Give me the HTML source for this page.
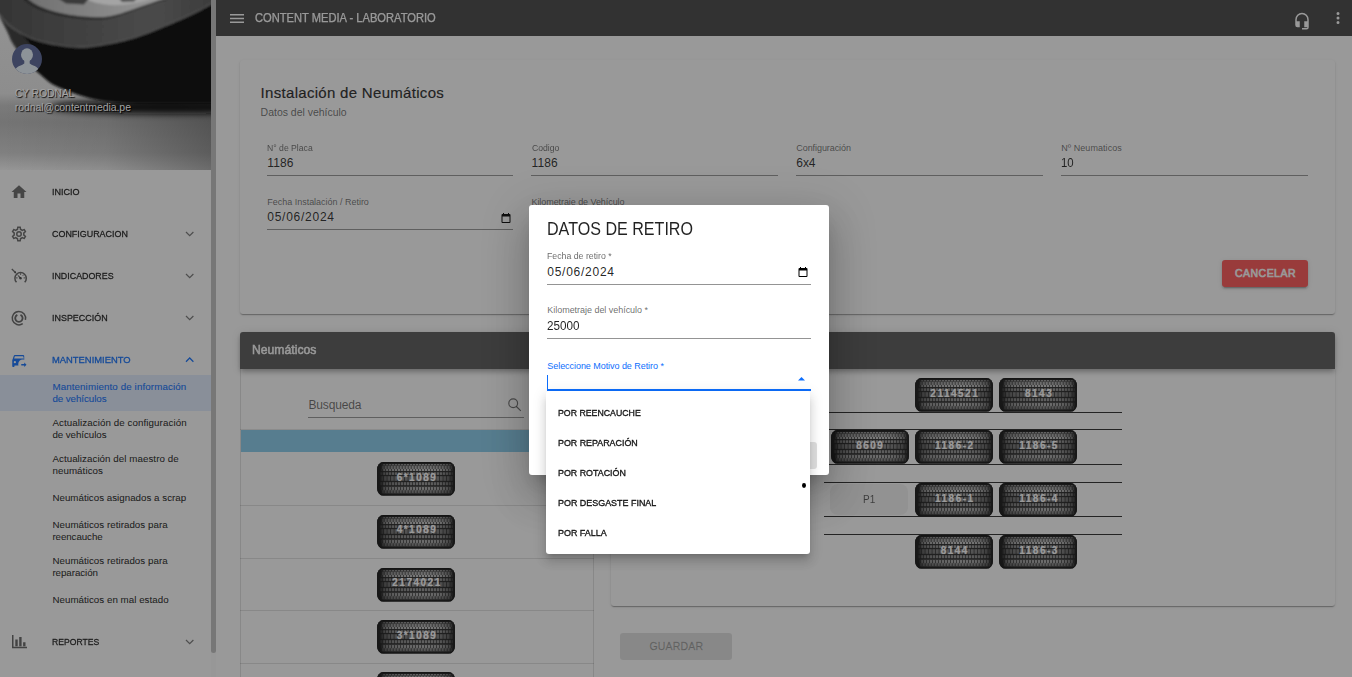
<!DOCTYPE html>
<html lang="es"><head><meta charset="utf-8"><title>CONTENT MEDIA - LABORATORIO</title>
<style>

html,body{margin:0;padding:0;background:#fff;}
body{width:1352px;height:677px;overflow:hidden;font-family:"Liberation Sans",sans-serif;}
#app{position:relative;width:1352px;height:677px;overflow:hidden;background:#fff;}
.t{position:absolute;white-space:nowrap;display:block;}
.abs{position:absolute;}
.card{position:absolute;background:#fff;border-radius:3px;box-shadow:0 2px 1px -1px rgba(0,0,0,.2),0 1px 1px 0 rgba(0,0,0,.14),0 1px 3px 0 rgba(0,0,0,.12);}
.tl{position:absolute;display:block;text-align:center;white-space:nowrap;font:bold 10px/10px 'Liberation Sans',sans-serif;letter-spacing:1.5px;color:#fff;text-shadow:0 0 1px rgba(255,255,255,.55);}
.ul{position:absolute;height:1px;background:rgba(0,0,0,.42);}
svg{position:absolute;overflow:visible;}

</style></head>
<body>
<div id="app">
<svg width="0" height="0" style="position:absolute"><defs>
<linearGradient id="tg" x1="0" x2="1" y1="0" y2="0"><stop offset="0" stop-color="#101010" stop-opacity="1"/><stop offset=".05" stop-color="#101010" stop-opacity=".85"/><stop offset=".1" stop-color="#101010" stop-opacity=".42"/><stop offset=".2" stop-color="#101010" stop-opacity=".2"/><stop offset=".4" stop-color="#101010" stop-opacity=".08"/><stop offset=".6" stop-color="#101010" stop-opacity="0"/><stop offset=".8" stop-color="#101010" stop-opacity=".12"/><stop offset=".92" stop-color="#101010" stop-opacity=".4"/><stop offset=".97" stop-color="#101010" stop-opacity=".8"/><stop offset="1" stop-color="#101010" stop-opacity="1"/></linearGradient>
<linearGradient id="tv" x1="0" x2="0" y1="0" y2="1"><stop offset="0" stop-color="#000" stop-opacity=".75"/><stop offset=".07" stop-color="#000" stop-opacity=".25"/><stop offset=".14" stop-color="#000" stop-opacity=".05"/><stop offset=".3" stop-color="#000" stop-opacity="0"/><stop offset=".75" stop-color="#000" stop-opacity=".1"/><stop offset=".93" stop-color="#000" stop-opacity=".35"/><stop offset="1" stop-color="#000" stop-opacity=".75"/></linearGradient>
<pattern id="p1" width="3" height="7" patternUnits="userSpaceOnUse"><rect x="0" y="0" width="2.300" height="3.400" fill="#cdcdcd"/><rect x="1.500" y="3.600" width="2.300" height="3.400" fill="#bcbcbc"/><rect x="-1.500" y="3.600" width="2.300" height="3.400" fill="#bcbcbc"/></pattern>
<pattern id="p2" width="3" height="4" patternUnits="userSpaceOnUse"><rect x="0" y="0" width="2.300" height="4" fill="#a2a2a2"/></pattern>
<pattern id="p3" width="3.500" height="6" patternUnits="userSpaceOnUse"><rect x="0" y="0" width="2.800" height="6" fill="#8e8e8e"/></pattern>
<clipPath id="tc"><rect x="0" y="0" width="78" height="33.600" rx="6.500" ry="7.500"/></clipPath>

</defs></svg>
<div style="position:absolute;left:216px;top:0px;width:1136px;height:36px;background:#424242;"></div>
<svg style="left:229.5px;top:13.5px" width="14" height="9" viewBox="0 0 14 9"><path d="M0 0h14v1.6H0zM0 3.7h14v1.6H0zM0 7.4h14V9H0z" fill="#fff"/></svg>
<span id="t0" class="t" style="left:254.7px;top:12.14px;font:400 12px/12px 'Liberation Sans',sans-serif;color:#fff;letter-spacing:0.000px;transform:scaleX(0.9281);transform-origin:0 0;-webkit-text-stroke:0.25px #fff;">CONTENT MEDIA - LABORATORIO</span>
<svg style="left:1293px;top:12.200px" width="18" height="18.400" preserveAspectRatio="none" viewBox="0 0 24 24"><path fill="#fff" d="M12 1a9 9 0 0 0-9 9v7a3 3 0 0 0 3 3h3v-8H5v-2a7 7 0 0 1 14 0v2h-4v8h4v1h-7v2h6a3 3 0 0 0 3-3V10a9 9 0 0 0-9-9z"/></svg>
<svg style="left:1329px;top:9px" width="18" height="18" viewBox="0 0 24 24"><path fill="#fff" d="M12 16a2 2 0 1 1 0 4 2 2 0 0 1 0-4zm0-6a2 2 0 1 1 0 4 2 2 0 0 1 0-4zm0-6a2 2 0 1 1 0 4 2 2 0 0 1 0-4z"/></svg>
<div class="card" style="left:240px;top:60px;width:1095px;height:254px"></div>
<span id="t1" class="t" style="left:260.6px;top:84.70px;font:400 15px/15px 'Liberation Sans',sans-serif;color:rgba(0,0,0,.87);letter-spacing:0.303px;-webkit-text-stroke:0.22px rgba(0,0,0,.87);">Instalación de Neumáticos</span>
<span id="t2" class="t" style="left:260.6px;top:107.01px;font:400 10.5px/10.5px 'Liberation Sans',sans-serif;color:rgba(0,0,0,.6);letter-spacing:-0.017px;">Datos del vehículo</span>
<span id="t3" class="t" style="left:267.3px;top:143.98px;font:400 9px/9px 'Liberation Sans',sans-serif;color:rgba(0,0,0,.6);letter-spacing:0.000px;transform:scaleX(0.9596);transform-origin:0 0;">N° de Placa</span><span id="t4" class="t" style="left:267.3px;top:156.84px;font:400 12px/12px 'Liberation Sans',sans-serif;color:rgba(0,0,0,.87);letter-spacing:0.096px;">1186</span><div class="ul" style="left:267px;top:175px;width:246px"></div>
<span id="t5" class="t" style="left:531.5999999999999px;top:143.98px;font:400 9px/9px 'Liberation Sans',sans-serif;color:rgba(0,0,0,.6);letter-spacing:0.000px;transform:scaleX(0.9604);transform-origin:0 0;">Codigo</span><span id="t6" class="t" style="left:531.5999999999999px;top:156.84px;font:400 12px/12px 'Liberation Sans',sans-serif;color:rgba(0,0,0,.87);letter-spacing:0.063px;">1186</span><div class="ul" style="left:531.3px;top:175px;width:246.5px"></div>
<span id="t7" class="t" style="left:796.3px;top:143.98px;font:400 9px/9px 'Liberation Sans',sans-serif;color:rgba(0,0,0,.6);letter-spacing:-0.071px;">Configuración</span><span id="t8" class="t" style="left:796.3px;top:156.84px;font:400 12px/12px 'Liberation Sans',sans-serif;color:rgba(0,0,0,.87);letter-spacing:-0.080px;">6x4</span><div class="ul" style="left:796px;top:175px;width:246.7px"></div>
<span id="t9" class="t" style="left:1061.3px;top:143.98px;font:400 9px/9px 'Liberation Sans',sans-serif;color:rgba(0,0,0,.6);letter-spacing:0.057px;">Nº Neumaticos</span><span id="t10" class="t" style="left:1061.3px;top:156.84px;font:400 12px/12px 'Liberation Sans',sans-serif;color:rgba(0,0,0,.87);letter-spacing:0.000px;transform:scaleX(0.9506);transform-origin:0 0;">10</span><div class="ul" style="left:1061px;top:175px;width:246.7px"></div>
<span id="t11" class="t" style="left:267.3px;top:197.98px;font:400 9px/9px 'Liberation Sans',sans-serif;color:rgba(0,0,0,.6);letter-spacing:-0.019px;">Fecha Instalación / Retiro</span><span id="t12" class="t" style="left:267.3px;top:210.84px;font:400 12px/12px 'Liberation Sans',sans-serif;color:rgba(0,0,0,.87);letter-spacing:0.737px;">05/06/2024</span><div class="ul" style="left:267px;top:229px;width:246px"></div>
<span id="t13" class="t" style="left:531.5px;top:197.98px;font:400 9px/9px 'Liberation Sans',sans-serif;color:rgba(0,0,0,.6);letter-spacing:-0.071px;">Kilometraje de Vehículo</span>
<svg style="left:499.5px;top:211.5px" width="12" height="12" viewBox="0 0 24 24"><path d="M19 4h-1V2h-2v2H8V2H6v2H5a2 2 0 0 0-2 2v14a2 2 0 0 0 2 2h14a2 2 0 0 0 2-2V6a2 2 0 0 0-2-2zm0 16H5V9h14v11z" fill="#000"/></svg>
<div style="position:absolute;left:1222px;top:260px;width:86px;height:27px;background:#ff5252;border-radius:3px;box-shadow:0 3px 1px -2px rgba(0,0,0,.2),0 2px 2px 0 rgba(0,0,0,.14),0 1px 5px 0 rgba(0,0,0,.12);"></div>
<span id="t14" class="t" style="left:1235px;top:268.41px;font:400 10.5px/10.5px 'Liberation Sans',sans-serif;color:#fff;letter-spacing:0.473px;-webkit-text-stroke:0.6px #fff;">CANCELAR</span>
<div style="position:absolute;left:240px;top:369px;width:354px;height:320px;background:#fff;border-left:1px solid rgba(0,0,0,.12);border-right:1px solid rgba(0,0,0,.12);box-sizing:border-box;"></div>
<span id="t15" class="t" style="left:308.5px;top:398.64px;font:400 12px/12px 'Liberation Sans',sans-serif;color:rgba(0,0,0,.6);letter-spacing:-0.178px;">Busqueda</span>
<div class="ul" style="left:308px;top:417px;width:215.5px"></div>
<svg style="left:505px;top:396px" width="18" height="18" viewBox="505 396 18 18"><g fill="none" stroke="rgba(0,0,0,.58)" stroke-width="1.150"><circle cx="513.200" cy="403.300" r="4.400"/><path d="M516.400 406.500l4.400 4.300"/></g></svg>
<div style="position:absolute;left:240.5px;top:429.6px;width:353px;height:22.6px;background:#86cbed;"></div>
<div style="position:absolute;left:240px;top:429px;width:354px;height:1px;background:rgba(0,0,0,.1);"></div>
<div style="position:absolute;left:240px;top:505px;width:354px;height:1px;background:rgba(0,0,0,.12);"></div>
<div style="position:absolute;left:240px;top:558px;width:354px;height:1px;background:rgba(0,0,0,.12);"></div>
<div style="position:absolute;left:240px;top:610px;width:354px;height:1px;background:rgba(0,0,0,.12);"></div>
<div style="position:absolute;left:240px;top:663px;width:354px;height:1px;background:rgba(0,0,0,.12);"></div>
<svg class="abs" style="left:377.2px;top:461.9px" width="78" height="34" viewBox="0 0 78 34"><rect x=".5" y="1" width="77" height="33" rx="6.500" ry="7.500" fill="#000" opacity=".25"/><rect x="0" y="0" width="78" height="33.600" rx="6.500" ry="7.500" fill="#262626"/>
<g clip-path="url(#tc)">
<rect x="4.500" y="2" width="71" height="7" fill="url(#p1)"/>
<rect x="3" y="10.300" width="73" height="2.600" fill="url(#p2)"/>
<rect x="3" y="14.200" width="73" height="4.600" fill="url(#p3)"/>
<rect x="3" y="20.200" width="73" height="3" fill="url(#p2)"/>
<g transform="translate(0,56.200) scale(1,-1)"><rect x="4.500" y="24.600" width="71" height="7" fill="url(#p1)"/></g>
<rect x="0" y="0" width="78" height="34" fill="url(#tg)"/>
<rect x="0" y="0" width="78" height="34" fill="url(#tv)"/>
</g></svg><span class="tl" style="left:378.0px;width:78px;top:472.74px;">6*1089</span>
<svg class="abs" style="left:377.2px;top:514.6px" width="78" height="34" viewBox="0 0 78 34"><rect x=".5" y="1" width="77" height="33" rx="6.500" ry="7.500" fill="#000" opacity=".25"/><rect x="0" y="0" width="78" height="33.600" rx="6.500" ry="7.500" fill="#262626"/>
<g clip-path="url(#tc)">
<rect x="4.500" y="2" width="71" height="7" fill="url(#p1)"/>
<rect x="3" y="10.300" width="73" height="2.600" fill="url(#p2)"/>
<rect x="3" y="14.200" width="73" height="4.600" fill="url(#p3)"/>
<rect x="3" y="20.200" width="73" height="3" fill="url(#p2)"/>
<g transform="translate(0,56.200) scale(1,-1)"><rect x="4.500" y="24.600" width="71" height="7" fill="url(#p1)"/></g>
<rect x="0" y="0" width="78" height="34" fill="url(#tg)"/>
<rect x="0" y="0" width="78" height="34" fill="url(#tv)"/>
</g></svg><span class="tl" style="left:378.0px;width:78px;top:525.43px;">4*1089</span>
<svg class="abs" style="left:377.2px;top:567.5px" width="78" height="34" viewBox="0 0 78 34"><rect x=".5" y="1" width="77" height="33" rx="6.500" ry="7.500" fill="#000" opacity=".25"/><rect x="0" y="0" width="78" height="33.600" rx="6.500" ry="7.500" fill="#262626"/>
<g clip-path="url(#tc)">
<rect x="4.500" y="2" width="71" height="7" fill="url(#p1)"/>
<rect x="3" y="10.300" width="73" height="2.600" fill="url(#p2)"/>
<rect x="3" y="14.200" width="73" height="4.600" fill="url(#p3)"/>
<rect x="3" y="20.200" width="73" height="3" fill="url(#p2)"/>
<g transform="translate(0,56.200) scale(1,-1)"><rect x="4.500" y="24.600" width="71" height="7" fill="url(#p1)"/></g>
<rect x="0" y="0" width="78" height="34" fill="url(#tg)"/>
<rect x="0" y="0" width="78" height="34" fill="url(#tv)"/>
</g></svg><span class="tl" style="left:378.0px;width:78px;top:578.33px;">2174021</span>
<svg class="abs" style="left:377.2px;top:619.8px" width="78" height="34" viewBox="0 0 78 34"><rect x=".5" y="1" width="77" height="33" rx="6.500" ry="7.500" fill="#000" opacity=".25"/><rect x="0" y="0" width="78" height="33.600" rx="6.500" ry="7.500" fill="#262626"/>
<g clip-path="url(#tc)">
<rect x="4.500" y="2" width="71" height="7" fill="url(#p1)"/>
<rect x="3" y="10.300" width="73" height="2.600" fill="url(#p2)"/>
<rect x="3" y="14.200" width="73" height="4.600" fill="url(#p3)"/>
<rect x="3" y="20.200" width="73" height="3" fill="url(#p2)"/>
<g transform="translate(0,56.200) scale(1,-1)"><rect x="4.500" y="24.600" width="71" height="7" fill="url(#p1)"/></g>
<rect x="0" y="0" width="78" height="34" fill="url(#tg)"/>
<rect x="0" y="0" width="78" height="34" fill="url(#tv)"/>
</g></svg><span class="tl" style="left:378.0px;width:78px;top:630.63px;">3*1089</span>
<svg class="abs" style="left:377.2px;top:672.4px" width="78" height="34" viewBox="0 0 78 34"><rect x=".5" y="1" width="77" height="33" rx="6.500" ry="7.500" fill="#000" opacity=".25"/><rect x="0" y="0" width="78" height="33.600" rx="6.500" ry="7.500" fill="#262626"/>
<g clip-path="url(#tc)">
<rect x="4.500" y="2" width="71" height="7" fill="url(#p1)"/>
<rect x="3" y="10.300" width="73" height="2.600" fill="url(#p2)"/>
<rect x="3" y="14.200" width="73" height="4.600" fill="url(#p3)"/>
<rect x="3" y="20.200" width="73" height="3" fill="url(#p2)"/>
<g transform="translate(0,56.200) scale(1,-1)"><rect x="4.500" y="24.600" width="71" height="7" fill="url(#p1)"/></g>
<rect x="0" y="0" width="78" height="34" fill="url(#tg)"/>
<rect x="0" y="0" width="78" height="34" fill="url(#tv)"/>
</g></svg><span class="tl" style="left:378.0px;width:78px;top:683.23px;">5*1089</span>
<div class="card" style="left:611px;top:369px;width:724px;height:237px;border-radius:0 0 3px 3px"></div>
<div style="position:absolute;left:824px;top:412px;width:298px;height:1px;background:rgba(0,0,0,.85);"></div>
<div style="position:absolute;left:824px;top:429px;width:298px;height:1px;background:rgba(0,0,0,.85);"></div>
<div style="position:absolute;left:824px;top:464px;width:298px;height:1px;background:rgba(0,0,0,.85);"></div>
<div style="position:absolute;left:824px;top:482px;width:298px;height:1px;background:rgba(0,0,0,.85);"></div>
<div style="position:absolute;left:824px;top:516px;width:298px;height:1px;background:rgba(0,0,0,.85);"></div>
<div style="position:absolute;left:824px;top:534px;width:298px;height:1px;background:rgba(0,0,0,.85);"></div>
<svg class="abs" style="left:915px;top:378px" width="78" height="34" viewBox="0 0 78 34"><rect x=".5" y="1" width="77" height="33" rx="6.500" ry="7.500" fill="#000" opacity=".25"/><rect x="0" y="0" width="78" height="33.600" rx="6.500" ry="7.500" fill="#262626"/>
<g clip-path="url(#tc)">
<rect x="4.500" y="2" width="71" height="7" fill="url(#p1)"/>
<rect x="3" y="10.300" width="73" height="2.600" fill="url(#p2)"/>
<rect x="3" y="14.200" width="73" height="4.600" fill="url(#p3)"/>
<rect x="3" y="20.200" width="73" height="3" fill="url(#p2)"/>
<g transform="translate(0,56.200) scale(1,-1)"><rect x="4.500" y="24.600" width="71" height="7" fill="url(#p1)"/></g>
<rect x="0" y="0" width="78" height="34" fill="url(#tg)"/>
<rect x="0" y="0" width="78" height="34" fill="url(#tv)"/>
</g></svg><span class="tl" style="left:915.8px;width:78px;top:388.84px;">2114521</span>
<svg class="abs" style="left:999.3px;top:378px" width="78" height="34" viewBox="0 0 78 34"><rect x=".5" y="1" width="77" height="33" rx="6.500" ry="7.500" fill="#000" opacity=".25"/><rect x="0" y="0" width="78" height="33.600" rx="6.500" ry="7.500" fill="#262626"/>
<g clip-path="url(#tc)">
<rect x="4.500" y="2" width="71" height="7" fill="url(#p1)"/>
<rect x="3" y="10.300" width="73" height="2.600" fill="url(#p2)"/>
<rect x="3" y="14.200" width="73" height="4.600" fill="url(#p3)"/>
<rect x="3" y="20.200" width="73" height="3" fill="url(#p2)"/>
<g transform="translate(0,56.200) scale(1,-1)"><rect x="4.500" y="24.600" width="71" height="7" fill="url(#p1)"/></g>
<rect x="0" y="0" width="78" height="34" fill="url(#tg)"/>
<rect x="0" y="0" width="78" height="34" fill="url(#tv)"/>
</g></svg><span class="tl" style="left:1000.0999999999999px;width:78px;top:388.84px;">8143</span>
<svg class="abs" style="left:830.5px;top:430.4px" width="78" height="34" viewBox="0 0 78 34"><rect x=".5" y="1" width="77" height="33" rx="6.500" ry="7.500" fill="#000" opacity=".25"/><rect x="0" y="0" width="78" height="33.600" rx="6.500" ry="7.500" fill="#262626"/>
<g clip-path="url(#tc)">
<rect x="4.500" y="2" width="71" height="7" fill="url(#p1)"/>
<rect x="3" y="10.300" width="73" height="2.600" fill="url(#p2)"/>
<rect x="3" y="14.200" width="73" height="4.600" fill="url(#p3)"/>
<rect x="3" y="20.200" width="73" height="3" fill="url(#p2)"/>
<g transform="translate(0,56.200) scale(1,-1)"><rect x="4.500" y="24.600" width="71" height="7" fill="url(#p1)"/></g>
<rect x="0" y="0" width="78" height="34" fill="url(#tg)"/>
<rect x="0" y="0" width="78" height="34" fill="url(#tv)"/>
</g></svg><span class="tl" style="left:831.3px;width:78px;top:441.24px;">8609</span>
<svg class="abs" style="left:915px;top:430.4px" width="78" height="34" viewBox="0 0 78 34"><rect x=".5" y="1" width="77" height="33" rx="6.500" ry="7.500" fill="#000" opacity=".25"/><rect x="0" y="0" width="78" height="33.600" rx="6.500" ry="7.500" fill="#262626"/>
<g clip-path="url(#tc)">
<rect x="4.500" y="2" width="71" height="7" fill="url(#p1)"/>
<rect x="3" y="10.300" width="73" height="2.600" fill="url(#p2)"/>
<rect x="3" y="14.200" width="73" height="4.600" fill="url(#p3)"/>
<rect x="3" y="20.200" width="73" height="3" fill="url(#p2)"/>
<g transform="translate(0,56.200) scale(1,-1)"><rect x="4.500" y="24.600" width="71" height="7" fill="url(#p1)"/></g>
<rect x="0" y="0" width="78" height="34" fill="url(#tg)"/>
<rect x="0" y="0" width="78" height="34" fill="url(#tv)"/>
</g></svg><span class="tl" style="left:915.8px;width:78px;top:441.24px;">1186-2</span>
<svg class="abs" style="left:999.3px;top:430.4px" width="78" height="34" viewBox="0 0 78 34"><rect x=".5" y="1" width="77" height="33" rx="6.500" ry="7.500" fill="#000" opacity=".25"/><rect x="0" y="0" width="78" height="33.600" rx="6.500" ry="7.500" fill="#262626"/>
<g clip-path="url(#tc)">
<rect x="4.500" y="2" width="71" height="7" fill="url(#p1)"/>
<rect x="3" y="10.300" width="73" height="2.600" fill="url(#p2)"/>
<rect x="3" y="14.200" width="73" height="4.600" fill="url(#p3)"/>
<rect x="3" y="20.200" width="73" height="3" fill="url(#p2)"/>
<g transform="translate(0,56.200) scale(1,-1)"><rect x="4.500" y="24.600" width="71" height="7" fill="url(#p1)"/></g>
<rect x="0" y="0" width="78" height="34" fill="url(#tg)"/>
<rect x="0" y="0" width="78" height="34" fill="url(#tv)"/>
</g></svg><span class="tl" style="left:1000.0999999999999px;width:78px;top:441.24px;">1186-5</span>
<div style="position:absolute;left:830px;top:483.8px;width:78.2px;height:31.4px;background:#f2f2f2;border-radius:8px;"></div>
<span id="t16" class="t" style="left:862.6px;top:493.71px;font:400 10.5px/10.5px 'Liberation Sans',sans-serif;color:rgba(0,0,0,.66);letter-spacing:0.000px;transform:scaleX(0.9499);transform-origin:0 0;">P1</span>
<svg class="abs" style="left:915px;top:482.8px" width="78" height="34" viewBox="0 0 78 34"><rect x=".5" y="1" width="77" height="33" rx="6.500" ry="7.500" fill="#000" opacity=".25"/><rect x="0" y="0" width="78" height="33.600" rx="6.500" ry="7.500" fill="#262626"/>
<g clip-path="url(#tc)">
<rect x="4.500" y="2" width="71" height="7" fill="url(#p1)"/>
<rect x="3" y="10.300" width="73" height="2.600" fill="url(#p2)"/>
<rect x="3" y="14.200" width="73" height="4.600" fill="url(#p3)"/>
<rect x="3" y="20.200" width="73" height="3" fill="url(#p2)"/>
<g transform="translate(0,56.200) scale(1,-1)"><rect x="4.500" y="24.600" width="71" height="7" fill="url(#p1)"/></g>
<rect x="0" y="0" width="78" height="34" fill="url(#tg)"/>
<rect x="0" y="0" width="78" height="34" fill="url(#tv)"/>
</g></svg><span class="tl" style="left:915.8px;width:78px;top:493.64px;">1186-1</span>
<svg class="abs" style="left:999.3px;top:482.8px" width="78" height="34" viewBox="0 0 78 34"><rect x=".5" y="1" width="77" height="33" rx="6.500" ry="7.500" fill="#000" opacity=".25"/><rect x="0" y="0" width="78" height="33.600" rx="6.500" ry="7.500" fill="#262626"/>
<g clip-path="url(#tc)">
<rect x="4.500" y="2" width="71" height="7" fill="url(#p1)"/>
<rect x="3" y="10.300" width="73" height="2.600" fill="url(#p2)"/>
<rect x="3" y="14.200" width="73" height="4.600" fill="url(#p3)"/>
<rect x="3" y="20.200" width="73" height="3" fill="url(#p2)"/>
<g transform="translate(0,56.200) scale(1,-1)"><rect x="4.500" y="24.600" width="71" height="7" fill="url(#p1)"/></g>
<rect x="0" y="0" width="78" height="34" fill="url(#tg)"/>
<rect x="0" y="0" width="78" height="34" fill="url(#tv)"/>
</g></svg><span class="tl" style="left:1000.0999999999999px;width:78px;top:493.64px;">1186-4</span>
<svg class="abs" style="left:915px;top:535.3px" width="78" height="34" viewBox="0 0 78 34"><rect x=".5" y="1" width="77" height="33" rx="6.500" ry="7.500" fill="#000" opacity=".25"/><rect x="0" y="0" width="78" height="33.600" rx="6.500" ry="7.500" fill="#262626"/>
<g clip-path="url(#tc)">
<rect x="4.500" y="2" width="71" height="7" fill="url(#p1)"/>
<rect x="3" y="10.300" width="73" height="2.600" fill="url(#p2)"/>
<rect x="3" y="14.200" width="73" height="4.600" fill="url(#p3)"/>
<rect x="3" y="20.200" width="73" height="3" fill="url(#p2)"/>
<g transform="translate(0,56.200) scale(1,-1)"><rect x="4.500" y="24.600" width="71" height="7" fill="url(#p1)"/></g>
<rect x="0" y="0" width="78" height="34" fill="url(#tg)"/>
<rect x="0" y="0" width="78" height="34" fill="url(#tv)"/>
</g></svg><span class="tl" style="left:915.8px;width:78px;top:546.13px;">8144</span>
<svg class="abs" style="left:999.3px;top:535.3px" width="78" height="34" viewBox="0 0 78 34"><rect x=".5" y="1" width="77" height="33" rx="6.500" ry="7.500" fill="#000" opacity=".25"/><rect x="0" y="0" width="78" height="33.600" rx="6.500" ry="7.500" fill="#262626"/>
<g clip-path="url(#tc)">
<rect x="4.500" y="2" width="71" height="7" fill="url(#p1)"/>
<rect x="3" y="10.300" width="73" height="2.600" fill="url(#p2)"/>
<rect x="3" y="14.200" width="73" height="4.600" fill="url(#p3)"/>
<rect x="3" y="20.200" width="73" height="3" fill="url(#p2)"/>
<g transform="translate(0,56.200) scale(1,-1)"><rect x="4.500" y="24.600" width="71" height="7" fill="url(#p1)"/></g>
<rect x="0" y="0" width="78" height="34" fill="url(#tg)"/>
<rect x="0" y="0" width="78" height="34" fill="url(#tv)"/>
</g></svg><span class="tl" style="left:1000.0999999999999px;width:78px;top:546.13px;">1186-3</span>
<div style="position:absolute;left:240px;top:332px;width:1095px;height:37px;background:#555;border-radius:3px 3px 0 0;box-shadow:0 2px 4px -1px rgba(0,0,0,.2),0 4px 5px 0 rgba(0,0,0,.14),0 1px 10px 0 rgba(0,0,0,.12);"></div>
<span id="t17" class="t" style="left:251.5px;top:343.10px;font:400 13px/13px 'Liberation Sans',sans-serif;color:#fff;letter-spacing:0.000px;transform:scaleX(0.9382);transform-origin:0 0;-webkit-text-stroke:0.5px #fff;">Neumáticos</span>
<div style="position:absolute;left:620px;top:633px;width:112px;height:27px;background:rgba(0,0,0,.12);border-radius:3px;"></div>
<span id="t18" class="t" style="left:649.5px;top:641.31px;font:400 10.5px/10.5px 'Liberation Sans',sans-serif;color:rgba(0,0,0,.26);letter-spacing:0.164px;-webkit-text-stroke:0.35px rgba(0,0,0,.26);">GUARDAR</span>
<div style="position:absolute;left:0px;top:0px;width:216px;height:677px;background:#fff;"></div>
<div style="position:absolute;left:215px;top:0px;width:1px;height:677px;background:rgba(0,0,0,.12);"></div>
<div style="position:absolute;left:211px;top:0px;width:5px;height:677px;background:#fbfbfb;"></div>
<div style="position:absolute;left:211px;top:0px;width:5px;height:653px;background:#c1c1c1;border-radius:0 0 3px 3px;"></div>
<span id="t19" class="t" style="left:52.4px;top:186.85px;font:400 9.75px/9.75px 'Liberation Sans',sans-serif;color:rgba(0,0,0,.87);letter-spacing:0.000px;transform:scaleX(0.9263);transform-origin:0 0;-webkit-text-stroke:0.3px rgba(0,0,0,.87);">INICIO</span>
<span id="t20" class="t" style="left:52.4px;top:228.75px;font:400 9.75px/9.75px 'Liberation Sans',sans-serif;color:rgba(0,0,0,.87);letter-spacing:0.000px;transform:scaleX(0.9158);transform-origin:0 0;-webkit-text-stroke:0.3px rgba(0,0,0,.87);">CONFIGURACION</span>
<svg style="left:184.8px;top:231.4px" width="9.4" height="5.8" viewBox="0 0 9.4 5.8"><path d="M1 1l3.7 3.7L8.4 1" fill="none" stroke="rgba(0,0,0,.54)" stroke-width="1.25"/></svg>
<span id="t21" class="t" style="left:52.4px;top:270.75px;font:400 9.75px/9.75px 'Liberation Sans',sans-serif;color:rgba(0,0,0,.87);letter-spacing:0.000px;transform:scaleX(0.9096);transform-origin:0 0;-webkit-text-stroke:0.3px rgba(0,0,0,.87);">INDICADORES</span>
<svg style="left:184.8px;top:273.40000000000003px" width="9.4" height="5.8" viewBox="0 0 9.4 5.8"><path d="M1 1l3.7 3.7L8.4 1" fill="none" stroke="rgba(0,0,0,.54)" stroke-width="1.25"/></svg>
<span id="t22" class="t" style="left:52.4px;top:312.75px;font:400 9.75px/9.75px 'Liberation Sans',sans-serif;color:rgba(0,0,0,.87);letter-spacing:0.000px;transform:scaleX(0.9162);transform-origin:0 0;-webkit-text-stroke:0.3px rgba(0,0,0,.87);">INSPECCIÓN</span>
<svg style="left:184.8px;top:315.40000000000003px" width="9.4" height="5.8" viewBox="0 0 9.4 5.8"><path d="M1 1l3.7 3.7L8.4 1" fill="none" stroke="rgba(0,0,0,.54)" stroke-width="1.25"/></svg>
<span id="t23" class="t" style="left:52.4px;top:354.85px;font:400 9.75px/9.75px 'Liberation Sans',sans-serif;color:#0d6efd;letter-spacing:0.000px;transform:scaleX(0.9629);transform-origin:0 0;-webkit-text-stroke:0.3px #0d6efd;">MANTENIMIENTO</span>
<svg style="left:184.8px;top:356.6px" width="9.4" height="5.8" viewBox="0 0 9.4 5.8"><path d="M1 4.7L4.7 1l3.700 3.700" fill="none" stroke="#0d6efd" stroke-width="1.25"/></svg>
<span id="t24" class="t" style="left:52.4px;top:636.75px;font:400 9.75px/9.75px 'Liberation Sans',sans-serif;color:rgba(0,0,0,.87);letter-spacing:0.000px;transform:scaleX(0.8828);transform-origin:0 0;-webkit-text-stroke:0.3px rgba(0,0,0,.87);">REPORTES</span>
<svg style="left:184.8px;top:639.3000000000001px" width="9.4" height="5.8" viewBox="0 0 9.4 5.8"><path d="M1 1l3.7 3.7L8.4 1" fill="none" stroke="rgba(0,0,0,.54)" stroke-width="1.25"/></svg>
<svg style="left:9.8px;top:182.6px" width="18" height="18" viewBox="0 0 24 24"><path fill="rgba(0,0,0,.6)" d="M10 20v-6h4v6h5v-8h3L12 3 2 12h3v8z"/></svg>
<svg style="left:10px;top:225px" width="18" height="18" viewBox="0 0 24 24"><path fill="rgba(0,0,0,.6)" d="M12 8a4 4 0 0 1 4 4 4 4 0 0 1-4 4 4 4 0 0 1-4-4 4 4 0 0 1 4-4m0 2a2 2 0 0 0-2 2 2 2 0 0 0 2 2 2 2 0 0 0 2-2 2 2 0 0 0-2-2m-2 12c-.25 0-.46-.18-.5-.42l-.37-2.650c-.63-.25-1.170-.59-1.690-.99l-2.490 1.010c-.22.080-.49 0-.61-.22l-2-3.460c-.13-.22-.07-.49.120-.64l2.110-1.660L4.500 12l.07-1-2.110-1.630c-.19-.15-.25-.42-.12-.64l2-3.460c.12-.22.390-.31.610-.22l2.490 1c.52-.39 1.060-.73 1.690-.98l.37-2.650c.04-.24.250-.42.500-.42h4c.25 0 .46.180.5.420l.37 2.650c.63.250 1.170.59 1.690.98l2.490-1c.22-.09.490 0 .61.220l2 3.460c.13.220.07.490-.12.640L19.430 11l.07 1-.07 1 2.110 1.630c.19.150.25.420.12.640l-2 3.460c-.12.220-.39.310-.61.220l-2.490-1c-.52.390-1.060.73-1.690.98l-.37 2.650c-.04.240-.25.420-.5.420h-4m1.250-18l-.37 2.610c-1.200.25-2.260.89-3.030 1.780L5.440 7.350l-.75 1.300L6.800 10.200a5.550 5.550 0 0 0 0 3.600l-2.120 1.560.75 1.300 2.430-1.040c.77.880 1.820 1.520 3.010 1.760l.37 2.620h1.520l.37-2.610c1.190-.25 2.240-.89 3.010-1.770l2.430 1.040.75-1.300-2.120-1.550c.4-1.170.4-2.440 0-3.610l2.110-1.550-.75-1.300-2.410 1.040a5.420 5.420 0 0 0-3.030-1.770L12.750 4h-1.500z"/></svg>
<svg style="left:10px;top:267px" width="18" height="18" viewBox="10 267 18 18"><g fill="none" stroke="rgba(0,0,0,.62)"><path d="M16.500 282.200A5.700 5.700 0 1 1 24.700 282.200" stroke-width="1.500"/><path d="M17.60 277.90L16.00 277.90M18.48 275.78L17.35 274.65M20.60 274.90L20.60 273.30M22.72 275.78L23.85 274.65M23.60 277.90L25.20 277.90" stroke-width="1"/><path d="M11.800 269l3.600 3.500" stroke-width="1.200"/><path d="M20.600 278.300l-2.100-2.500" stroke-width="1.300"/></g><path d="M16.300 273.400l-2.400-.5 1.900-1.900z" fill="rgba(0,0,0,.62)"/><circle cx="20.600" cy="278.300" r="1.300" fill="rgba(0,0,0,.62)"/></svg>
<svg style="left:10px;top:309px" width="18" height="18" viewBox="10 309 18 18"><g fill="none" stroke="rgba(0,0,0,.62)"><path d="M22.74 323.69A6.700 6.700 0 1 1 25.37 319.93" stroke-width="1.500"/><path d="M20.46 314.85A3.700 3.700 0 1 1 17.34 314.85" stroke-width="1.900"/></g></svg>
<svg style="left:10.150px;top:351.700px" width="18" height="18" viewBox="0 0 24 24"><path fill="#0d6efd" fill-rule="evenodd" d="M18.920 5.010C18.720 4.420 18.160 4 17.500 4h-11c-.66 0-1.210.42-1.420 1.010L3 11v8c0 .55.450 1 1 1h1c.55 0 1-.45 1-1v-1h5.300c-.19-.63-.3-1.300-.3-2 0-3.310 2.690-6 6-6 .7 0 1.370.11 2 .3V11zM6.500 5.500h11l1.030 3H5.470zM6.500 12a1.500 1.500 0 1 1 0 3 1.500 1.500 0 0 1 0-3zM19 20v-2h-4v-2h4v-2l3 3z"/></svg>
<svg style="left:11.500px;top:635.300px" width="15" height="14" viewBox="0 0 15 14"><path fill="rgba(0,0,0,.62)" d="M0 0h1.500v11.700H15v1.500H0zM3.300 4.500h2.400v6.800H3.300zM7.200 2h2.400v9.300H7.200zM11.100 7.300h2.400v4h-2.400z"/></svg>
<div style="position:absolute;left:0px;top:375px;width:211px;height:36px;background:rgba(13,110,253,.12);"></div>
<span id="t25" class="t" style="left:52.4px;top:381.55px;font:400 9.75px/9.75px 'Liberation Sans',sans-serif;color:#0d6efd;letter-spacing:0.118px;-webkit-text-stroke:0.12px #0d6efd;">Mantenimiento de información</span><span id="t26" class="t" style="left:52.4px;top:393.55px;font:400 9.75px/9.75px 'Liberation Sans',sans-serif;color:#0d6efd;letter-spacing:-0.050px;-webkit-text-stroke:0.12px #0d6efd;">de vehículos</span>
<span id="t27" class="t" style="left:52.4px;top:417.65px;font:400 9.75px/9.75px 'Liberation Sans',sans-serif;color:rgba(0,0,0,.87);letter-spacing:0.086px;-webkit-text-stroke:0.12px rgba(0,0,0,.87);">Actualización de configuración</span><span id="t28" class="t" style="left:52.4px;top:429.55px;font:400 9.75px/9.75px 'Liberation Sans',sans-serif;color:rgba(0,0,0,.87);letter-spacing:-0.050px;-webkit-text-stroke:0.12px rgba(0,0,0,.87);">de vehículos</span>
<span id="t29" class="t" style="left:52.4px;top:453.75px;font:400 9.75px/9.75px 'Liberation Sans',sans-serif;color:rgba(0,0,0,.87);letter-spacing:0.057px;-webkit-text-stroke:0.12px rgba(0,0,0,.87);">Actualización del maestro de</span><span id="t30" class="t" style="left:52.4px;top:465.75px;font:400 9.75px/9.75px 'Liberation Sans',sans-serif;color:rgba(0,0,0,.87);letter-spacing:0.082px;-webkit-text-stroke:0.12px rgba(0,0,0,.87);">neumáticos</span>
<span id="t31" class="t" style="left:52.4px;top:493.05px;font:400 9.75px/9.75px 'Liberation Sans',sans-serif;color:rgba(0,0,0,.87);letter-spacing:0.017px;-webkit-text-stroke:0.12px rgba(0,0,0,.87);">Neumáticos asignados a scrap</span>
<span id="t32" class="t" style="left:52.4px;top:520.15px;font:400 9.75px/9.75px 'Liberation Sans',sans-serif;color:rgba(0,0,0,.87);letter-spacing:0.036px;-webkit-text-stroke:0.12px rgba(0,0,0,.87);">Neumáticos retirados para</span><span id="t33" class="t" style="left:52.4px;top:532.15px;font:400 9.75px/9.75px 'Liberation Sans',sans-serif;color:rgba(0,0,0,.87);letter-spacing:-0.074px;-webkit-text-stroke:0.12px rgba(0,0,0,.87);">reencauche</span>
<span id="t34" class="t" style="left:52.4px;top:555.65px;font:400 9.75px/9.75px 'Liberation Sans',sans-serif;color:rgba(0,0,0,.87);letter-spacing:0.036px;-webkit-text-stroke:0.12px rgba(0,0,0,.87);">Neumáticos retirados para</span><span id="t35" class="t" style="left:52.4px;top:567.55px;font:400 9.75px/9.75px 'Liberation Sans',sans-serif;color:rgba(0,0,0,.87);letter-spacing:-0.053px;-webkit-text-stroke:0.12px rgba(0,0,0,.87);">reparación</span>
<span id="t36" class="t" style="left:52.4px;top:595.15px;font:400 9.75px/9.75px 'Liberation Sans',sans-serif;color:rgba(0,0,0,.87);letter-spacing:0.033px;-webkit-text-stroke:0.12px rgba(0,0,0,.87);">Neumáticos en mal estado</span>
<div style="position:absolute;left:0px;top:0px;width:1352px;height:677px;background:rgba(33,33,33,.46);"></div>
<svg style="left:0;top:0" width="211" height="170" viewBox="0 0 211 170">
<defs>
<linearGradient id="gnd" x1="0" x2="0" y1="0" y2="1"><stop offset="0" stop-color="#939393"/><stop offset=".55" stop-color="#8d8d8d"/><stop offset=".62" stop-color="#7a7a7a"/><stop offset=".72" stop-color="#747474"/><stop offset=".9" stop-color="#808080"/><stop offset="1" stop-color="#969696"/></linearGradient>
<linearGradient id="gsh" x1="0" x2="1" y1="0" y2="0"><stop offset="0" stop-color="#000" stop-opacity="0"/><stop offset=".5" stop-color="#000" stop-opacity=".06"/><stop offset="1" stop-color="#000" stop-opacity=".28"/></linearGradient>
<linearGradient id="swg" x1="0" x2="1" y1="0" y2="0"><stop offset="0" stop-color="#343434"/><stop offset=".35" stop-color="#404040"/><stop offset=".7" stop-color="#4a4a4a"/><stop offset="1" stop-color="#3a3a3a"/></linearGradient>
<linearGradient id="rmg" x1="0" x2="1" y1="0" y2="0"><stop offset="0" stop-color="#6e6e6e"/><stop offset=".5" stop-color="#858585"/><stop offset="1" stop-color="#9a9a9a"/></linearGradient>
<filter id="b1" x="-20%" y="-20%" width="140%" height="140%"><feGaussianBlur stdDeviation="0.8"/></filter>
<filter id="b3" x="-30%" y="-100%" width="160%" height="300%"><feGaussianBlur stdDeviation="3.5"/></filter>
<clipPath id="pc"><rect x="0" y="0" width="211" height="170"/></clipPath>
</defs>
<g clip-path="url(#pc)">
<rect width="211" height="170" fill="url(#gnd)"/>
<rect y="100" width="211" height="70" fill="url(#gsh)"/>
<ellipse cx="165" cy="107" rx="115" ry="7" fill="#0c0c0c" filter="url(#b3)"/>
<g filter="url(#b1)">
<path d="M-6.0 4.0L-5.5 4.9L-5.0 6.2L-4.3 7.6L-3.5 9.3L-2.6 11.1L-1.8 12.9L-0.9 14.7L0.0 16.5L0.9 18.3L1.8 20.2L2.8 22.2L3.9 24.2L4.9 26.2L5.8 28.2L6.8 30.1L7.6 31.8L8.3 33.4L8.9 34.7L9.4 36.0L9.8 37.3L10.3 38.5L10.9 39.9L11.7 41.3L12.7 43.0L13.9 44.9L15.2 47.0L16.7 49.2L18.3 51.5L20.0 53.8L21.8 56.1L23.6 58.4L25.4 60.5L27.3 62.6L29.3 64.6L31.5 66.7L33.6 68.7L35.8 70.7L37.9 72.6L40.0 74.3L42.0 76.0L43.7 77.5L45.2 78.8L46.6 80.1L48.0 81.2L49.5 82.3L51.2 83.5L53.4 84.7L56.0 86.0L59.2 87.5L63.0 89.0L67.1 90.7L71.4 92.3L75.9 94.0L80.4 95.5L84.8 96.8L89.0 98.0L93.0 98.9L96.9 99.7L100.8 100.4L104.7 100.9L108.5 101.4L112.4 101.8L116.2 102.2L120.0 102.5L123.6 102.8L126.7 103.0L129.7 103.2L132.8 103.3L136.2 103.4L140.0 103.4L144.5 103.4L150.0 103.5L157.0 103.5L165.5 103.6L175.0 103.6L184.9 103.6L194.5 103.5L203.3 103.5L210.7 103.5L216.0 103.5L216 -12L-6 -12Z" fill="#0d0d0d"/>
<path d="M0 17L7.6 32L12.7 43L25 60L38 52L20 33L6 18Z" fill="#2c2c2c"/>
<path d="M-6.0 8.0L-5.6 8.5L-5.1 9.1L-4.5 9.8L-3.8 10.7L-3.0 11.6L-2.1 12.7L-1.1 13.8L0.0 15.0L1.2 16.3L2.4 17.8L3.7 19.5L5.1 21.2L6.7 22.9L8.5 24.6L10.5 26.4L12.7 28.0L15.2 29.6L17.8 31.3L20.7 33.0L23.8 34.7L27.0 36.3L30.5 37.9L34.1 39.3L38.0 40.6L42.2 41.8L46.8 42.8L51.7 43.9L56.8 44.8L61.9 45.5L66.8 46.2L71.6 46.7L76.0 47.0L80.0 47.1L83.8 47.1L87.4 46.9L90.9 46.5L94.4 46.0L97.8 45.5L101.3 44.9L105.0 44.3L108.8 43.6L112.6 42.9L116.4 42.1L120.2 41.3L124.1 40.4L128.0 39.3L132.0 38.2L136.0 37.0L140.1 35.6L144.4 34.1L148.7 32.5L153.0 30.8L157.3 29.1L161.6 27.3L165.6 25.6L169.5 24.0L173.2 22.4L176.9 20.8L180.5 19.3L183.9 17.7L187.2 16.2L190.3 14.7L193.3 13.3L196.0 12.0L198.5 10.8L200.7 9.7L202.6 8.6L204.5 7.6L206.2 6.7L207.8 5.8L209.4 4.9L211.0 4.0L212.6 3.1L214.3 2.2L215.9 1.3L217.4 0.5L218.9 -0.3L220.1 -1.0L221.2 -1.6L222.0 -2.0L222 -12L-6 -12Z" fill="url(#swg)"/>
<path d="M-6.0 8.0L-5.6 8.5L-5.1 9.1L-4.5 9.8L-3.8 10.7L-3.0 11.6L-2.1 12.7L-1.1 13.8L0.0 15.0L1.2 16.3L2.4 17.8L3.7 19.5L5.1 21.2L6.7 22.9L8.5 24.6L10.5 26.4L12.7 28.0L15.2 29.6L17.8 31.3L20.7 33.0L23.8 34.7L27.0 36.3L30.5 37.9L34.1 39.3L38.0 40.6L42.2 41.8L46.8 42.8L51.7 43.9L56.8 44.8L61.9 45.5L66.8 46.2L71.6 46.7L76.0 47.0L80.0 47.1L83.8 47.1L87.4 46.9L90.9 46.5L94.4 46.0L97.8 45.5L101.3 44.9L105.0 44.3L108.8 43.6L112.6 42.9L116.4 42.1L120.2 41.3L124.1 40.4L128.0 39.3L132.0 38.2L136.0 37.0L140.1 35.6L144.4 34.1L148.7 32.5L153.0 30.8L157.3 29.1L161.6 27.3L165.6 25.6L169.5 24.0L173.2 22.4L176.9 20.8L180.5 19.3L183.9 17.7L187.2 16.2L190.3 14.7L193.3 13.3L196.0 12.0L198.5 10.8L200.7 9.7L202.6 8.6L204.5 7.6L206.2 6.7L207.8 5.8L209.4 4.9L211.0 4.0L212.6 3.1L214.3 2.2L215.9 1.3L217.4 0.5L218.9 -0.3L220.1 -1.0L221.2 -1.6L222.0 -2.0" fill="none" stroke="#5c5c5c" stroke-width="1.6" opacity=".7"/>
<path d="M20.0 -6.0L20.2 -5.6L20.5 -5.0L20.8 -4.3L21.1 -3.6L21.6 -2.7L22.2 -1.9L23.0 -0.9L24.0 0.0L25.2 1.0L26.5 2.1L28.0 3.2L29.7 4.4L31.5 5.6L33.5 6.8L35.6 7.9L38.0 9.0L40.6 10.0L43.4 11.1L46.5 12.1L49.7 13.1L53.0 14.1L56.4 15.0L59.9 15.8L63.5 16.5L67.2 17.1L71.3 17.7L75.5 18.2L79.8 18.6L84.0 18.9L88.0 19.2L91.7 19.4L95.0 19.5L97.8 19.5L100.3 19.4L102.4 19.3L104.4 19.0L106.2 18.7L108.0 18.4L109.9 18.0L112.0 17.5L114.1 17.0L116.2 16.5L118.2 15.9L120.2 15.2L122.3 14.5L124.6 13.7L127.0 12.9L129.6 12.0L132.6 11.0L136.0 9.8L139.6 8.5L143.3 7.2L147.0 5.9L150.4 4.6L153.4 3.6L156.0 2.7L158.0 2.1L159.6 1.6L160.9 1.3L162.0 1.1L162.9 0.9L163.7 0.7L164.6 0.4L165.5 0.0L166.5 -0.5L167.5 -1.2L168.4 -1.9L169.3 -2.7L170.2 -3.4L170.9 -4.0L171.5 -4.6L172.0 -5.0L172 -12L20 -12Z" fill="#262626"/>
<path d="M22.5 -8.2L22.7 -7.8L23.0 -7.2L23.3 -6.5L23.6 -5.8L24.1 -4.9L24.7 -4.1L25.5 -3.1L26.5 -2.2L27.7 -1.2L29.0 -0.1L30.5 1.0L32.2 2.2L34.0 3.4L36.0 4.6L38.1 5.7L40.5 6.8L43.1 7.8L45.9 8.9L49.0 9.9L52.2 10.9L55.5 11.9L58.9 12.8L62.4 13.6L66.0 14.3L69.7 14.9L73.8 15.5L78.0 16.0L82.3 16.4L86.5 16.7L90.5 17.0L94.2 17.2L97.5 17.3L100.3 17.3L102.8 17.2L104.9 17.1L106.9 16.8L108.7 16.5L110.5 16.2L112.4 15.8L114.5 15.3L116.6 14.8L118.7 14.3L120.7 13.7L122.7 13.0L124.8 12.3L127.1 11.5L129.5 10.7L132.1 9.8L135.1 8.8L138.5 7.6L142.1 6.3L145.8 5.0L149.5 3.7L152.9 2.5L155.9 1.4L158.5 0.5L160.5 -0.1L162.1 -0.6L163.4 -0.9L164.5 -1.1L165.4 -1.3L166.2 -1.5L167.1 -1.8L168.0 -2.2L169.0 -2.7L170.0 -3.4L170.9 -4.1L171.8 -4.9L172.7 -5.6L173.4 -6.2L174.0 -6.8L174.5 -7.2L174.5 -12L22.5 -12Z" fill="url(#rmg)"/>
<path d="M82.0 -6.0L82.4 -5.5L82.9 -4.9L83.5 -4.1L84.2 -3.2L85.0 -2.3L85.9 -1.5L86.9 -0.7L88.0 0.0L89.2 0.6L90.5 1.1L91.9 1.6L93.4 2.1L94.9 2.5L96.6 2.9L98.3 3.3L100.0 3.6L101.8 3.9L103.6 4.2L105.6 4.5L107.6 4.8L109.6 5.0L111.7 5.1L113.8 5.2L116.0 5.2L118.3 5.1L120.7 5.0L123.2 4.8L125.7 4.5L128.2 4.2L130.6 3.9L132.9 3.5L135.0 3.2L137.0 2.9L138.8 2.5L140.6 2.2L142.3 1.8L143.9 1.4L145.4 1.0L146.8 0.5L148.0 0.0L149.1 -0.6L150.1 -1.2L151.0 -2.0L151.8 -2.7L152.5 -3.4L153.1 -4.1L153.6 -4.6L154.0 -5.0L154 -12L82 -12Z" fill="#a4a4a4"/>
<path d="M56 -3L66 3.500L84 4.500L90 -3Z" fill="#3a3a3a"/><path d="M118 -3L122 2L134 1.500L138 -3Z" fill="#555"/>
</g>
</g></svg>
<svg style="left:12px;top:43.700px" width="30" height="30" viewBox="0 0 30 30"><defs><clipPath id="avc"><circle cx="15" cy="15" r="15"/></clipPath></defs><circle cx="15" cy="15" r="15" fill="#3d4460"/><g clip-path="url(#avc)" fill="#8d9398"><ellipse cx="15" cy="10.800" rx="6" ry="6.600"/><path d="M12.300 15h5.400v4.500c2 1.800 6.500 2.300 8.800 5.500v6h-23v-6c2.300-3.200 6.800-3.700 8.800-5.500z"/></g></svg>
<span id="t37" class="t" style="left:14.7px;top:87.51px;font:400 10.5px/10.5px 'Liberation Sans',sans-serif;color:#a4a4a4;letter-spacing:-0.172px;text-shadow:1px 1px 1px #000;">CY RODNAL</span>
<span id="t38" class="t" style="left:14.7px;top:102.01px;font:400 10.5px/10.5px 'Liberation Sans',sans-serif;color:#a4a4a4;letter-spacing:-0.056px;text-shadow:1px 1px 1px #000;">rodnal@contentmedia.pe</span>
<div style="position:absolute;left:529.3px;top:205px;width:299.5px;height:269.5px;background:#fff;border-radius:3px;box-shadow:0 11px 15px -7px rgba(0,0,0,.2),0 24px 38px 3px rgba(0,0,0,.14),0 9px 46px 8px rgba(0,0,0,.12);"></div>
<span id="t39" class="t" style="left:547.3px;top:220.06px;font:400 18px/18px 'Liberation Sans',sans-serif;color:rgba(0,0,0,.87);letter-spacing:0.000px;transform:scaleX(0.8937);transform-origin:0 0;">DATOS DE RETIRO</span>
<span id="t40" class="t" style="left:547.3px;top:252.48px;font:400 9px/9px 'Liberation Sans',sans-serif;color:rgba(0,0,0,.6);letter-spacing:0.000px;transform:scaleX(0.9722);transform-origin:0 0;">Fecha de retiro *</span>
<span id="t41" class="t" style="left:547.3px;top:266.04px;font:400 12px/12px 'Liberation Sans',sans-serif;color:rgba(0,0,0,.87);letter-spacing:0.738px;">05/06/2024</span>
<svg style="left:797px;top:266px" width="12" height="12" viewBox="0 0 24 24"><path d="M19 4h-1V2h-2v2H8V2H6v2H5a2 2 0 0 0-2 2v14a2 2 0 0 0 2 2h14a2 2 0 0 0 2-2V6a2 2 0 0 0-2-2zm0 16H5V9h14v11z" fill="#000"/></svg>
<div class="ul" style="left:547px;top:284px;width:263.8px"></div>
<span id="t42" class="t" style="left:547.3px;top:306.08px;font:400 9px/9px 'Liberation Sans',sans-serif;color:rgba(0,0,0,.6);letter-spacing:-0.034px;">Kilometraje del vehículo *</span>
<span id="t43" class="t" style="left:547.3px;top:320.04px;font:400 12px/12px 'Liberation Sans',sans-serif;color:rgba(0,0,0,.87);letter-spacing:0.000px;transform:scaleX(0.9738);transform-origin:0 0;">25000</span>
<div class="ul" style="left:547px;top:338px;width:263.8px"></div>
<span id="t44" class="t" style="left:547.3px;top:361.88px;font:400 9px/9px 'Liberation Sans',sans-serif;color:#0d6efd;letter-spacing:-0.052px;">Seleccione Motivo de Retiro *</span>
<div style="position:absolute;left:547px;top:375px;width:1px;height:13.5px;background:#0d6efd;"></div>
<div style="position:absolute;left:547px;top:388.5px;width:263.8px;height:2px;background:#0d6efd;"></div>
<svg style="left:798.3px;top:377.2px" width="7" height="3.600" viewBox="0 0 7 3.600"><path d="M0 3.600L3.500 0 7 3.600z" fill="#0d6efd"/></svg>
<div style="position:absolute;left:760px;top:442px;width:56.8px;height:27.3px;background:rgba(0,0,0,.12);border-radius:3px;"></div>
<div style="position:absolute;left:546.3px;top:391px;width:263.6px;height:162.6px;background:#fff;border-radius:3px;box-shadow:0 5px 5px -3px rgba(0,0,0,.16),0 8px 10px 1px rgba(0,0,0,.1),0 3px 14px 2px rgba(0,0,0,.09);"></div>
<span id="t45" class="t" style="left:558.4px;top:407.55px;font:400 9.75px/9.75px 'Liberation Sans',sans-serif;color:rgba(0,0,0,.87);letter-spacing:0.000px;transform:scaleX(0.8989);transform-origin:0 0;-webkit-text-stroke:0.38px rgba(0,0,0,.87);">POR REENCAUCHE</span>
<span id="t46" class="t" style="left:558.4px;top:437.65px;font:400 9.75px/9.75px 'Liberation Sans',sans-serif;color:rgba(0,0,0,.87);letter-spacing:0.000px;transform:scaleX(0.9099);transform-origin:0 0;-webkit-text-stroke:0.38px rgba(0,0,0,.87);">POR REPARACIÓN</span>
<span id="t47" class="t" style="left:558.4px;top:467.65px;font:400 9.75px/9.75px 'Liberation Sans',sans-serif;color:rgba(0,0,0,.87);letter-spacing:0.000px;transform:scaleX(0.9105);transform-origin:0 0;-webkit-text-stroke:0.38px rgba(0,0,0,.87);">POR ROTACIÓN</span>
<span id="t48" class="t" style="left:558.4px;top:497.75px;font:400 9.75px/9.75px 'Liberation Sans',sans-serif;color:rgba(0,0,0,.87);letter-spacing:0.000px;transform:scaleX(0.9163);transform-origin:0 0;-webkit-text-stroke:0.38px rgba(0,0,0,.87);">POR DESGASTE FINAL</span>
<span id="t49" class="t" style="left:558.4px;top:527.85px;font:400 9.75px/9.75px 'Liberation Sans',sans-serif;color:rgba(0,0,0,.87);letter-spacing:0.000px;transform:scaleX(0.9170);transform-origin:0 0;-webkit-text-stroke:0.38px rgba(0,0,0,.87);">POR FALLA</span>
<div style="position:absolute;left:801.6px;top:483.2px;width:4.2px;height:5.2px;background:#000;border-radius:50% 50% 50% 50%;"></div>
</div>
</body></html>
